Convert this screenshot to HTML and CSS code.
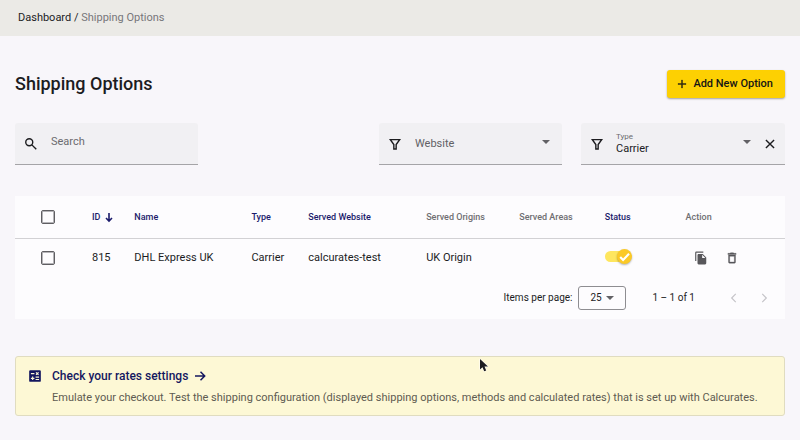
FILE: index.html
```html
<!DOCTYPE html>
<html lang="en">
<head>
<meta charset="utf-8">
<meta name="viewport" content="width=device-width, initial-scale=1">
<title>Shipping Options</title>
<link rel="stylesheet" href="styles.css">
</head>
<body>
<nav class="breadcrumb"><a href="#">Dashboard</a> / <span class="breadcrumb-current">Shipping Options</span></nav>
<main class="page">
  <header class="page-header">
    <h1>Shipping Options</h1>
    <button class="add-button" type="button">
      <svg class="icon icon-small" viewBox="0 0 24 24"><path d="M20 13h-7v7h-2v-7H4v-2h7V4h2v7h7v2z" stroke="currentColor" stroke-width=".6"/></svg>
      Add New Option
    </button>
  </header>

  <form class="filters">
    <div class="field search-field">
      <svg class="icon" viewBox="0 0 24 24"><circle class="line" cx="9" cy="9" r="6"/><path class="line" d="M13.500 13.500l7.500 7.500"/></svg>
      <input type="text" placeholder="Search" aria-label="Search">
    </div>
    <div class="field website-field">
      <svg class="icon" viewBox="0 0 24 24"><path class="line" d="M4 4.500h16L14 13v7.500h-4V13z"/></svg>
      <select class="placeholder" aria-label="Website"><option>Website</option></select>
      <svg class="caret" viewBox="0 0 8 4"><path d="M0 0h8L4 4z"/></svg>
    </div>
    <div class="field type-field">
      <svg class="icon" viewBox="0 0 24 24"><path class="line" d="M4 4.500h16L14 13v7.500h-4V13z"/></svg>
      <div class="labelled">
        <label for="type">Type</label>
        <select id="type"><option>Carrier</option></select>
      </div>
      <svg class="caret" viewBox="0 0 8 4"><path d="M0 0h8L4 4z"/></svg>
      <button class="icon-button" type="button" aria-label="Clear">
        <svg class="icon" viewBox="0 0 24 24"><path class="line" d="M5 5l14 14M19 5L5 19"/></svg>
      </button>
    </div>
  </form>

  <section class="card">
    <table>
      <colgroup>
        <col class="col-check"><col class="col-id"><col class="col-name"><col class="col-type"><col class="col-website"><col class="col-origins"><col class="col-areas"><col class="col-status"><col>
      </colgroup>
      <thead>
        <tr>
          <th class="check-cell"><input class="checkbox" type="checkbox" aria-label="Select all"></th>
          <th class="sortable"><span class="sorted">ID <svg class="sort-arrow" viewBox="0 0 10 12"><path d="M5 2v8M2 7l3 3 3-3"/></svg></span></th>
          <th class="sortable">Name</th>
          <th class="sortable">Type</th>
          <th class="sortable">Served Website</th>
          <th>Served Origins</th>
          <th>Served Areas</th>
          <th class="sortable">Status</th>
          <th>Action</th>
        </tr>
      </thead>
      <tbody>
        <tr>
          <td class="check-cell"><input class="checkbox" type="checkbox" aria-label="Select 815"></td>
          <td>815</td>
          <td>DHL Express UK</td>
          <td>Carrier</td>
          <td>calcurates-test</td>
          <td>UK Origin</td>
          <td></td>
          <td>
            <label class="switch">
              <input type="checkbox" checked aria-label="Status">
              <span class="knob"><svg viewBox="0 0 14 14"><path d="M3 7.500l2.700 2.700L11.200 4.500"/></svg></span>
            </label>
          </td>
          <td>
            <div class="actions">
              <button class="icon-button" type="button" aria-label="Duplicate"><svg class="icon" viewBox="0 0 24 24"><path d="M16 1H4a2 2 0 0 0-2 2v14h2V3h12V1zm-1 4l6 6v10a2 2 0 0 1-2 2H7.990A2 2 0 0 1 6 21V7c0-1.100.9-2 1.990-2H15zm-1 7h5.500L14 6.500V12z"/></svg></button>
              <button class="icon-button" type="button" aria-label="Delete"><svg class="icon" viewBox="0 0 24 24"><path d="M6 19a2 2 0 0 0 2 2h8a2 2 0 0 0 2-2V7H6v12zM8 9h8v10H8V9zm7.500-5l-1-1h-5l-1 1H5v2h14V4h-3.500z" stroke="currentColor" stroke-width=".6"/></svg></button>
            </div>
          </td>
        </tr>
      </tbody>
    </table>
    <div class="paginator">
      <label for="page-size">Items per page:</label>
      <div class="page-size">
        <select id="page-size"><option>25</option></select>
        <svg class="caret" viewBox="0 0 8 4"><path d="M0 0h8L4 4z"/></svg>
      </div>
      <span class="range">1 – 1 of 1</span>
      <div class="pager">
        <button class="icon-button" type="button" disabled aria-label="Previous page"><svg class="icon" viewBox="0 0 24 24"><path class="line" d="M15 5l-7 7 7 7"/></svg></button>
        <button class="icon-button" type="button" disabled aria-label="Next page"><svg class="icon" viewBox="0 0 24 24"><path class="line" d="M9 5l7 7-7 7"/></svg></button>
      </div>
    </div>
  </section>

  <aside class="notice">
    <svg class="icon notice-icon" viewBox="0 0 24 24"><path fill-rule="evenodd" d="M4 2h16a2 2 0 0 1 2 2v16a2 2 0 0 1-2 2H4a2 2 0 0 1-2-2V4a2 2 0 0 1 2-2zM5 7v2h6V7zm2 6v2H5v2h2v2h2v-2h2v-2H9v-2zm6 0v2h6v-2zm0 4v2h6v-2zm1.400-11.900L13 6.500 14.500 8 13 9.500l1.400 1.400L15.900 9.400l1.500 1.500 1.400-1.400L17.300 8l1.500-1.500-1.400-1.400-1.500 1.500z"/></svg>
    <div>
      <a class="notice-link" href="#">Check your rates settings <svg class="notice-arrow" viewBox="0 0 12 12"><path d="M1 6h9.500M6.500 1.800L10.700 6l-4.200 4.200"/></svg></a>
      <p>Emulate your checkout. Test the shipping configuration (displayed shipping options, methods and calculated rates) that is set up with Calcurates.</p>
    </div>
  </aside>
</main>
<svg class="pointer" viewBox="0 0 10 15"><path d="M1 1v10.500l2.500-2.300 1.700 4.100 2-.9-1.700-3.900H9z"/></svg>
</body>
</html>
```
FILE: styles.css
```css
* {
  box-sizing: border-box;
}

body {
  margin: 0;
  position: relative;
  background: #f8f6fa;
  color: #1c1c1f;
  font: 11px/16px Roboto, "Liberation Sans", sans-serif;
}

button,
input,
select {
  font: inherit;
  color: inherit;
  margin: 0;
  padding: 0;
  border: 0;
  background: none;
}

select {
  appearance: none;
  width: 100%;
}

a {
  color: inherit;
  text-decoration: none;
}

svg {
  display: block;
  flex: none;
  fill: currentColor;
}

.icon {
  width: 14px;
  height: 14px;
}

.icon-small {
  width: 12px;
  height: 12px;
}

.line {
  fill: none;
  stroke: currentColor;
  stroke-width: 2;
}

.field .line {
  stroke-width: 2.4;
}

.caret {
  width: 8px;
  height: 4px;
  color: #626165;
}

.icon-button {
  display: flex;
}

.breadcrumb {
  padding: 10px 18px;
  background: #ebeae6;
}

.breadcrumb-current {
  color: #77767a;
}

.page {
  padding: 34px 15px 24px;
}

.page-header {
  display: flex;
  align-items: center;
  justify-content: space-between;
  margin-bottom: 25px;
}

h1 {
  margin: 0;
  font-size: 18px;
  line-height: 28px;
  font-weight: 500;
}

.add-button {
  display: flex;
  align-items: center;
  gap: 5px;
  height: 28px;
  padding: 0 12px 0 9px;
  border-radius: 3px;
  background: #fdd002;
  color: #151515;
  font-weight: 500;
  box-shadow: 0 1px 2px rgba(0, 0, 0, 0.35);
}

.filters {
  display: grid;
  grid-template-columns: 183fr 143fr 183fr 204fr;
  gap: 19px;
  margin-bottom: 31px;
}

.field {
  display: flex;
  align-items: center;
  gap: 13px;
  height: 42px;
  padding: 0 12px 0 9px;
  border-bottom: 1px solid #a5a4a7;
  border-radius: 3px 3px 0 0;
  background: #f1f0f3;
}

.search-field input {
  width: 100%;
  min-width: 0;
  padding-bottom: 4px;
}

.search-field input::placeholder {
  color: #6c6b6f;
  opacity: 1;
}

.website-field {
  grid-column: 3;
}

.type-field {
  gap: 12px;
  padding-right: 8px;
}

.field .caret {
  margin-bottom: 4px;
}

.placeholder {
  color: #626165;
}

.labelled {
  flex: 1;
  display: flex;
  flex-direction: column;
}

.labelled label {
  color: #6c6b6f;
  font-size: 8px;
  line-height: 10px;
}

.labelled select {
  line-height: 14px;
}

.card {
  margin-bottom: 37px;
  background: #fdfcfe;
}

table {
  width: 100%;
  table-layout: fixed;
  border-collapse: collapse;
}

.col-check { width: 10%; }
.col-id { width: 5.5%; }
.col-name { width: 15.2%; }
.col-type { width: 7.4%; }
.col-website { width: 15.3%; }
.col-origins { width: 12.1%; }
.col-areas { width: 11.1%; }
.col-status { width: 10.5%; }

th,
td {
  height: 39px;
  padding: 0;
  text-align: left;
  white-space: nowrap;
}

th {
  height: 42px;
  border-bottom: 1px solid #d2d1d4;
  color: #6f6e72;
  font-size: 9px;
  font-weight: 500;
}

.sortable {
  color: #1b1b6b;
}

.sorted {
  display: flex;
  align-items: center;
  gap: 4px;
}

.sort-arrow {
  width: 10px;
  height: 12px;
  fill: none;
  stroke: currentColor;
  stroke-width: 1.6;
}

.check-cell {
  padding-left: 26px;
}

.checkbox {
  display: block;
  appearance: none;
  width: 14px;
  height: 14px;
  border: 1px solid #5f5e62;
  border-radius: 2px;
  box-shadow: inset 0 0 0 1px #b5b4b8;
}

.switch {
  display: block;
  position: relative;
  width: 28px;
  height: 16px;
}

.switch input {
  display: block;
  appearance: none;
  width: 24px;
  height: 11px;
  margin-top: 3px;
  border-radius: 6px;
  background: #fee65f;
}

.knob {
  position: absolute;
  top: -2px;
  right: 1px;
  width: 15px;
  height: 15px;
  border-radius: 50%;
  background: #fbc926;
  box-shadow: 0 1px 2px rgba(0, 0, 0, 0.3);
}

.knob svg {
  fill: none;
  stroke: #fff;
  stroke-width: 2;
}

.actions {
  display: flex;
  gap: 17px;
  padding-left: 8px;
  color: #58575b;
}

.paginator {
  display: flex;
  align-items: center;
  justify-content: flex-end;
  height: 42px;
  padding: 0 14px 0 0;
  font-size: 10px;
}

.page-size {
  display: flex;
  align-items: center;
  width: 48px;
  height: 24px;
  margin: 0 26px 0 6px;
  padding: 0 11px;
  border: 1px solid #8e8d91;
  border-radius: 3px;
}

.pager {
  display: flex;
  gap: 16px;
  margin-left: 32px;
  color: #c5c4c8;
}

.notice {
  display: flex;
  gap: 10px;
  padding: 10px 14px 9px 12px;
  border: 1px solid #e0dcc0;
  border-radius: 3px;
  background: #fdf8d5;
}

.notice-icon {
  margin-top: 2px;
  color: #14175f;
}

.notice-link {
  display: flex;
  align-items: center;
  gap: 6px;
  color: #14175f;
  font-size: 12px;
  line-height: 18px;
  font-weight: 500;
}

.notice-arrow {
  width: 12px;
  height: 12px;
  fill: none;
  stroke: currentColor;
  stroke-width: 1.5;
}

.notice p {
  margin: 5px 0 0;
  color: #5e5b51;
}

.pointer {
  position: absolute;
  left: 479px;
  top: 358px;
  width: 10px;
  height: 15px;
  stroke: #fff;
  stroke-width: 1;
  paint-order: stroke;
}
```
